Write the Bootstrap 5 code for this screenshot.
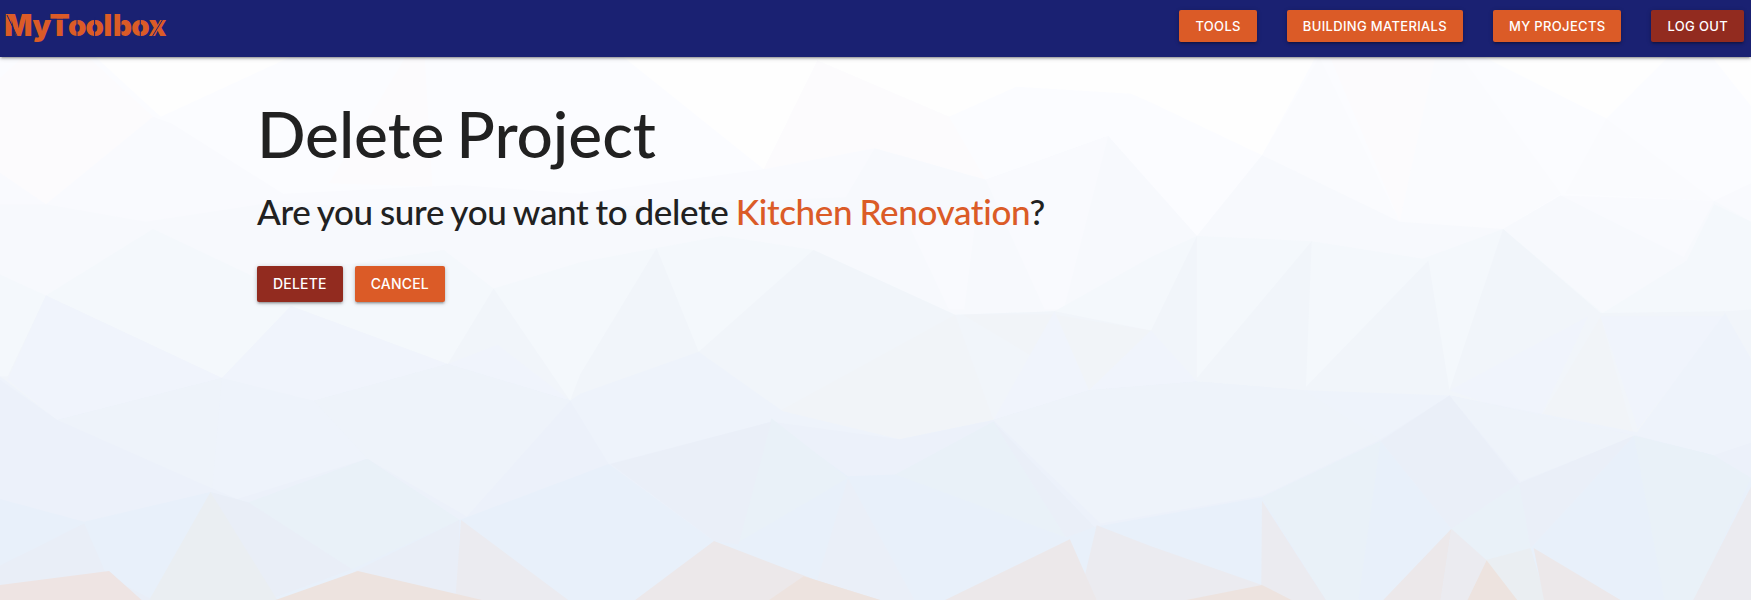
<!DOCTYPE html>
<html lang="en">
<head>
<meta charset="utf-8">
<meta name="viewport" content="width=device-width, initial-scale=1">
<title>Delete Project - MyToolbox</title>
<link rel="stylesheet" href="https://cdn.jsdelivr.net/npm/bootstrap@5.3.0/dist/css/bootstrap.min.css">
<style>
body{min-height:100vh;background:#fbfcff;color:#212121;font-family:Lato,"Liberation Sans",sans-serif;overflow:hidden}
.backdrop{z-index:-1}
.topbar{height:57px;background:#1a2172;padding:0 7px 0 5px;box-shadow:0 2px 2px 0 rgba(0,0,0,.14),0 3px 1px -2px rgba(0,0,0,.12),0 1px 5px 0 rgba(0,0,0,.2)}
.logo-svg{overflow:visible}
.nav-actions{gap:30px;padding-bottom:5px}
.btn-tool{--bs-btn-color:#fff;--bs-btn-bg:#db5b27;--bs-btn-hover-color:#fff;--bs-btn-hover-bg:#e66b38;font-family:Inter,sans-serif;font-size:14px;font-weight:500;height:36px;line-height:36px;padding:0 16px;border:0;border-radius:2px;letter-spacing:.2px;box-shadow:0 2px 2px 0 rgba(0,0,0,.14),0 3px 1px -2px rgba(0,0,0,.12),0 1px 5px 0 rgba(0,0,0,.2)}
.btn-tool-sm{font-size:13px;height:32px;line-height:32px;letter-spacing:.33px}
.btn-danger-dark{--bs-btn-bg:#922b1f;--bs-btn-hover-bg:#a5372a}
.page{width:70%;max-width:1280px;padding:0;margin-left:257px}
h1{font-size:64px;line-height:70px;margin:42px 0 0;font-weight:500;letter-spacing:-.1px;word-spacing:-4px}
h2{font-size:35px;line-height:39px;margin:23px 0 0;font-weight:500;letter-spacing:-.33px;word-spacing:-1.4px}
.project-name{color:#db5b27}
.actions{gap:12px;margin-top:35px}
</style>
<script src="https://cdn.jsdelivr.net/npm/bootstrap@5.3.0/dist/js/bootstrap.bundle.min.js"></script>
</head>
<body>
<svg class="backdrop position-absolute top-0 start-0 w-100 h-100" viewBox="0 -142.5 4576 1710.5" preserveAspectRatio="none" aria-hidden="true">
<!-- upper facets -->
<path fill="#fefefe" d="M230 0L420 190 640 80 800 0zM1606 0L1996 340 2136 30 2480 190 2656 105 2956 125 3008 150 3298 300 3448 0zM3878 20L4198 195 4378 0H3848zM4460 0L4576 160V0z"/>
<path fill="#fcfbfd" d="M0 80L60 20H230L400 190 120 440 0 350zM1060 20L860 380 1130 390 1110 20zM2136 30L2480 190 2576 370 2286 280 1996 340zM3468 0H3755L3658 490z"/>
<path fill="#fafbfe" d="M3755 0L3658 490 3928 510 4080 410 3820 20zM3448 20L3298 300 3658 490zM4198 195L4090 410 4480 430z"/>
<path fill="#f9fafe" d="M0 350L120 440 400 190 450 210 740 410 1200 385 1516 410 1996 340 2286 280 2576 370 2896 245 3128 530 3298 300 3658 490 3928 510 4078 415 4480 430 4576 380V1568H0z"/>
<path fill="#f7f9fd" d="M0 440H120L380 490 740 430 1200 480 1516 450 2210 420 2286 280 2576 370 2896 245 3128 530 3298 300 3658 490 3928 510 4078 415 4400 590 4480 430 4576 490V1568H0z"/>
<path fill="#f9fafe" d="M2576 370L2896 245 2780 740 2730 740zM2380 510L2480 740H2520L2550 480z"/>
<!-- middle facets -->
<path fill="#f4f8fc" d="M0 640L120 700 400 510 670 650 1160 570 1290 680 1516 605 1886 530 2126 570 2496 755 2756 745 3008 590 3128 530 3428 545 3718 595 3928 510 4188 750 4408 600 4480 440 4576 490V1568H0z"/>
<path fill="#f1f5fa" d="M0 930H20L120 700 580 935 760 730 1170 895 1290 680 1490 1000 1516 925 1716 565 1826 860 2126 570 2496 755 2756 745 3008 800 3128 530V935L3428 545 3413 960 3733 600 3788 970 3928 510 4183 750 4508 745 4576 740V1568H0z"/>
<path fill="#f1f4f8" d="M2036 1030L2496 755 2596 1055 2351 1110zM2516 755H2756L3008 800 2846 970zM4183 760L4020 1060 4270 1100z"/>
<path fill="#f0f4fc" d="M20 940L120 700 580 935 150 1055zM580 935L760 730 1170 895 820 1000zM1170 895L1300 840 1490 1000zM2756 745L2596 1055 2846 970zM3008 800L2846 970 3128 945zM4150 760L3788 970 4020 1060zM4183 760H4508L4280 1080z"/>
<path fill="#eef3fb" d="M0 930L150 1055 580 935 820 1000 1170 895 1490 1000 1516 980 1826 860 2046 1030 2351 1110 2596 1055 2846 970 3128 945 3408 970 3788 985 4278 1090 4508 750 4576 880V1568H0z"/>
<path fill="#ecf1fa" d="M0 940L150 1055 580 935 555 1250 620 1280 960 1165 820 1000 1170 895 1490 1000 1591 1180 2016 1060 2351 1110 2596 1055 2846 970 3128 945 3300 1270 3608 1110 3788 985 4278 1100 4478 1155 4576 1120V1568H0z"/>
<path fill="#eef3fa" d="M2846 970L3128 945 3408 970 3608 1110 3300 1270 2876 1350 2596 1055zM3788 985L4278 1100 3973 1230zM150 1055L580 935 555 1250zM820 1000L960 1165 1220 1330 1490 1000 1170 895z"/>
<!-- lower facets -->
<path fill="#e8f0fa" d="M0 1280L220 1345 550 1260 650 1290 960 1165 1200 1340 1591 1180 1866 1400 2016 1060 2216 1215 2340 1210 2596 1060 2860 1360 3298 1275 3608 1115 3793 1365 3970 1235 4000 1420 4270 1100 4478 1155 4576 1220V1568H0z"/>
<path fill="#e9f1f8" d="M650 1290L960 1165 1200 1340 920 1480zM2016 1050L2216 1220 1920 1410zM2340 1210L2596 1060 2786 1390zM3298 1275L3608 1115 3550 1568H3465zM3793 1365L3970 1235 4000 1420 3880 1455zM4270 1100L4478 1155 4576 1220 4430 1568H4350z"/>
<path fill="#eaeff8" d="M2016 1060L1596 1180 1866 1400 1930 1410zM2216 1220L2120 1568H2390zM3608 1115L3793 1365 3970 1235 3788 985zM3970 1235L4000 1420 4270 1100zM2596 1060L2786 1390 2860 1360z"/>
<path fill="#e9eef7" d="M0 1470L220 1350 280 1500 400 1568H0zM550 1260L700 1568 920 1480 650 1290zM920 1490L1200 1340V1568z"/>
<path fill="#eaeef2" d="M550 1260L390 1568H725zM3880 1455L4000 1420 4040 1568H3950z"/>
<path fill="#ebebf0" d="M1205 1340L1190 1568H1485zM2866 1355L3008 1415 3298 1525 3350 1568H2820zM3298 1285L3296 1568H3465zM4576 1245L4425 1568H4576zM3793 1365L3885 1455 3835 1568H3765z"/>
<path fill="#ece8ea" d="M1660 1568L1866 1400 2130 1510 2300 1568zM2470 1568L2796 1395 2866 1568zM3615 1568L3793 1365 3765 1568zM4008 1420L4235 1568H4035z"/>
<path fill="#ede3df" d="M720 1568L935 1485 1260 1568zM2010 1568L2100 1500 2300 1568zM3100 1568L3298 1525 3375 1568zM3835 1568L3885 1455 3965 1568z"/>
<path fill="#eee4e3" d="M0 1525L285 1485 370 1568H0z"/>
</svg>
<nav class="topbar d-flex align-items-center justify-content-between">
<a href="#" class="d-block" aria-label="MyToolbox"><svg class="logo-svg d-block" width="168" height="57" viewBox="5 0 168 57">
<text y="36" x="4.3 32.5 49.5 68 85.6 103.4 113 131.3 148.4" font-family="Inter, sans-serif" font-weight="900" font-size="29.5" fill="#db5b27">MyToolbox</text>
<!-- stencil bridges -->
<path d="M7 15L17 36M49.5 19.3H69M77 17V25M77 30V38M94.6 17V25M94.6 30V38M121 12V38M140.3 17V25M140.3 30V38M152 37L163 19" fill="none" stroke="#1a2172" stroke-width="1"/>
</svg></a>
<div class="nav-actions d-flex">
<a href="#" class="btn btn-tool btn-tool-sm">TOOLS</a>
<a href="#" class="btn btn-tool btn-tool-sm">BUILDING MATERIALS</a>
<a href="#" class="btn btn-tool btn-tool-sm">MY PROJECTS</a>
<a href="#" class="btn btn-tool btn-tool-sm btn-danger-dark">LOG OUT</a>
</div>
</nav>
<main class="page">
<h1>Delete Project</h1>
<h2>Are you sure you want to delete <span class="project-name">Kitchen Renovation</span>?</h2>
<div class="actions d-flex">
<button type="submit" class="btn btn-tool btn-danger-dark">DELETE</button>
<a href="#" class="btn btn-tool">CANCEL</a>
</div>
</main>
</body>
</html>
